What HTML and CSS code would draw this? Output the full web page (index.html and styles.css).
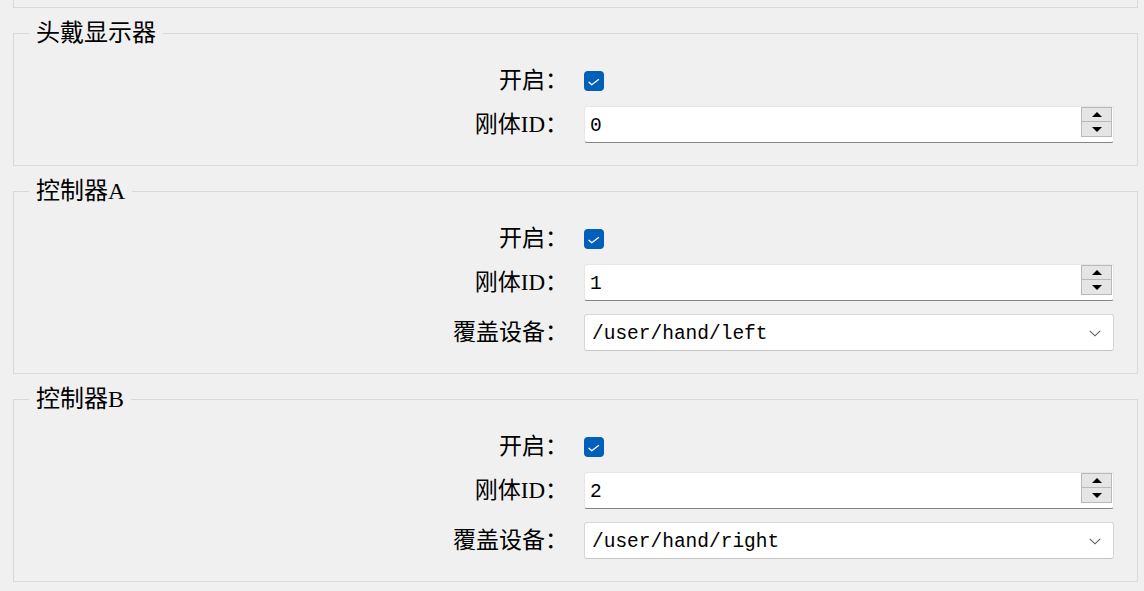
FILE: index.html
```html
<!DOCTYPE html>
<html lang="zh">
<head>
<meta charset="utf-8">
<link rel="stylesheet" href="styles.css">
</head>
<body>
<div class="page">
  <div class="prev"></div>

  <fieldset class="group">
    <legend class="title">头戴显示器</legend>
    <div class="form">
      <span class="lbl">开启：</span>
      <div class="ctl"><span class="check"><svg width="20" height="20" viewBox="0 0 20 20"><path d="M5 11.2 L7.8 13.8 L14.6 8.6" fill="none" stroke="#fff" stroke-width="1.3" stroke-linecap="round" stroke-linejoin="round"/></svg></span></div>
      <span class="lbl">刚体ID：</span>
      <div class="spin"><span class="val">0</span><div class="btns"><span class="btn"><i class="up"></i></span><span class="btn down"><i class="dn"></i></span></div></div>
    </div>
  </fieldset>

  <fieldset class="group">
    <legend class="title">控制器A</legend>
    <div class="form">
      <span class="lbl">开启：</span>
      <div class="ctl"><span class="check"><svg width="20" height="20" viewBox="0 0 20 20"><path d="M5 11.2 L7.8 13.8 L14.6 8.6" fill="none" stroke="#fff" stroke-width="1.3" stroke-linecap="round" stroke-linejoin="round"/></svg></span></div>
      <span class="lbl">刚体ID：</span>
      <div class="spin"><span class="val">1</span><div class="btns"><span class="btn"><i class="up"></i></span><span class="btn down"><i class="dn"></i></span></div></div>
      <span class="lbl">覆盖设备：</span>
      <div class="combo"><span class="val">/user/hand/left</span><svg class="chev" width="12" height="7" viewBox="0 0 12 7"><path d="M0.8 0.8 L6 5.8 L11.2 0.8" fill="none" stroke="#5a5a5a" stroke-width="1.1"/></svg></div>
    </div>
  </fieldset>

  <fieldset class="group">
    <legend class="title">控制器B</legend>
    <div class="form">
      <span class="lbl">开启：</span>
      <div class="ctl"><span class="check"><svg width="20" height="20" viewBox="0 0 20 20"><path d="M5 11.2 L7.8 13.8 L14.6 8.6" fill="none" stroke="#fff" stroke-width="1.3" stroke-linecap="round" stroke-linejoin="round"/></svg></span></div>
      <span class="lbl">刚体ID：</span>
      <div class="spin"><span class="val">2</span><div class="btns"><span class="btn"><i class="up"></i></span><span class="btn down"><i class="dn"></i></span></div></div>
      <span class="lbl">覆盖设备：</span>
      <div class="combo"><span class="val">/user/hand/right</span><svg class="chev" width="12" height="7" viewBox="0 0 12 7"><path d="M0.8 0.8 L6 5.8 L11.2 0.8" fill="none" stroke="#5a5a5a" stroke-width="1.1"/></svg></div>
    </div>
  </fieldset>
</div>
</body>
</html>
```

FILE: styles.css
```css
html, body {
  margin: 0;
  padding: 0;
  background: #f0f0f0;
}
body {
  font-family: "Liberation Serif", "Noto Sans CJK SC", serif;
  color: #000;
  width: 1144px;
  height: 591px;
  overflow: hidden;
}
.page {
  padding: 0 6px 0 13px;
}
.prev {
  height: 7px;
  border: 1px solid #d9d9d9;
  border-top: none;
}
.group {
  margin: 13px 0 0 0;
  padding: 24px 0 22px 0;
  border: 1px solid #d9d9d9;
  min-width: 0;
}
.title {
  margin-left: 15px;
  padding: 0 7px;
  font-size: 24px;
  line-height: 24px;
  height: 24px;
}
.form {
  display: grid;
  grid-template-columns: 1fr 530px;
  column-gap: 16px;
  row-gap: 13px;
  padding-right: 23px;
  align-items: center;
}
.lbl {
  justify-self: end;
  font-size: 23px;
  line-height: 24px;
  white-space: nowrap;
}
.ctl {
  height: 20px;
  display: flex;
}
.check {
  width: 20px;
  height: 20px;
  border-radius: 4px;
  background: #005fb8;
  display: block;
}
.check svg {
  display: block;
}
.spin {
  height: 37px;
  box-sizing: border-box;
  background: #fff;
  border: 1px solid #e6e6e6;
  border-bottom: 1px solid #858585;
  border-radius: 3px;
  display: flex;
  align-items: flex-start;
  justify-content: space-between;
  padding: 0 1px 0 5px;
}
.val {
  font-family: "Liberation Mono", monospace;
  font-size: 19.5px;
  line-height: 35px;
  padding-top: 2px;
}
.btns {
  display: flex;
  flex-direction: column;
  width: 31px;
}
.btn {
  height: 15px;
  box-sizing: border-box;
  border: 1px solid #b9b9b9;
  background: #e5e5e5;
  display: flex;
  align-items: center;
  justify-content: center;
}
.btn.down {
  margin-top: -1px;
  height: 16px;
}
.up {
  width: 0;
  height: 0;
  border-left: 5px solid transparent;
  border-right: 5px solid transparent;
  border-bottom: 5px solid #000;
}
.dn {
  width: 0;
  height: 0;
  border-left: 5px solid transparent;
  border-right: 5px solid transparent;
  border-top: 5px solid #000;
}
.combo {
  height: 37px;
  box-sizing: border-box;
  background: #fff;
  border: 1px solid #d6d6d6;
  border-bottom-color: #c4c4c4;
  border-radius: 3px;
  display: flex;
  align-items: flex-start;
  justify-content: space-between;
  padding: 0 12px 0 7px;
}
.chev {
  display: block;
  margin-top: 15px;
}
```
